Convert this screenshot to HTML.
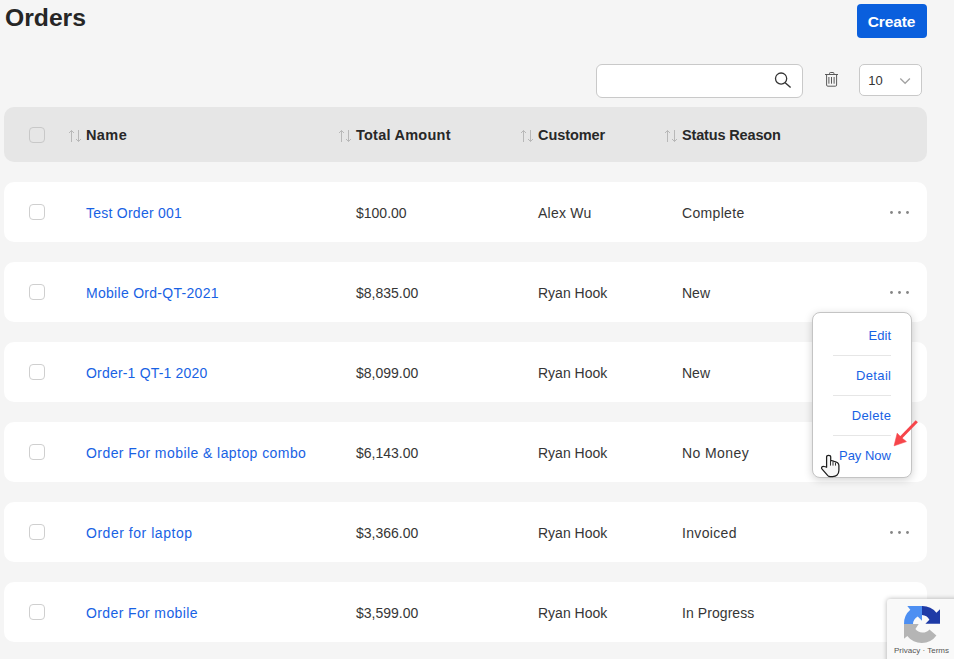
<!DOCTYPE html>
<html><head><meta charset="utf-8">
<style>
*{box-sizing:border-box;margin:0;padding:0}
html,body{width:954px;height:659px;overflow:hidden;background:#f5f5f5;font-family:"Liberation Sans",sans-serif;color:#333}
.abs{position:absolute}
.ov{position:absolute;left:0;top:0}
.title{position:absolute;left:5px;top:1px;font-size:24.7px;font-weight:bold;color:#262626;line-height:34px}
.create{position:absolute;left:857px;top:4px;width:70px;height:34px;background:#0a5fdd;border-radius:4px;color:#fff;font-weight:bold;font-size:15.5px;line-height:35px;text-align:center;letter-spacing:-0.1px;text-indent:-1px}
.search{position:absolute;left:596px;top:64px;width:207px;height:34px;background:#fff;border:1px solid #c9c9c9;border-radius:6px}
.sel{position:absolute;left:859px;top:64px;width:63px;height:32px;background:#fff;border:1px solid #c9c9c9;border-radius:5px;font-size:13px;color:#222}
.hdr{position:absolute;left:4px;top:107px;width:923px;height:55px;background:#e6e6e6;border-radius:10px}
.row{position:absolute;left:4px;width:923px;height:60px;background:#fff;border-radius:10px}
.cb{position:absolute;left:25px;width:16px;height:16px;border:1px solid #cfcfcf;border-radius:4px;background:#fff}
.hdr .cb{top:20px;background:transparent;border-color:#c8c8c8}
.row .cb{top:22px}
.ht{position:absolute;top:1px;line-height:55px;font-size:14.5px;font-weight:bold;color:#282828;white-space:nowrap}
.t{position:absolute;top:1px;line-height:60px;font-size:14px;color:#363636;white-space:nowrap}
.lnk{color:#1862e4}
.pop{position:absolute;left:812px;top:312px;width:100px;height:166px;background:#fff;border:1px solid #c4c4c4;border-radius:8px;box-shadow:0 2px 8px rgba(0,0,0,.18)}
.pi{position:absolute;right:20px;font-size:13px;color:#1862e4;line-height:16px;white-space:nowrap}
.sep{position:absolute;left:20px;width:58px;height:1px;background:#e6e6e6}
.badge{position:absolute;left:887px;top:599px;width:80px;height:70px;background:#f9f9f9;border-radius:3px 0 0 0;box-shadow:0 0 5px rgba(0,0,0,.3)}
</style></head><body>
<div class="title">Orders</div>
<div class="create">Create</div>
<div class="search"></div>
<div class="sel"><span class="abs" style="left:8.3px;top:8px;line-height:16px;color:#333">10</span></div>
<div class="hdr"><div class="cb"></div><div class="ht" style="left:82px;letter-spacing:0.4px">Name</div><div class="ht" style="left:352px;letter-spacing:0.24px">Total Amount</div><div class="ht" style="left:534px;letter-spacing:-0.07px">Customer</div><div class="ht" style="left:678px;letter-spacing:-0.15px">Status Reason</div></div>
<div class="row" style="top:182px"><div class="cb"></div><div class="t lnk" style="left:82px;letter-spacing:0.25px">Test Order 001</div><div class="t" style="left:352px">$100.00</div><div class="t" style="left:534px;letter-spacing:0.23px">Alex Wu</div><div class="t" style="left:678px;letter-spacing:0.33px">Complete</div></div>
<div class="row" style="top:262px"><div class="cb"></div><div class="t lnk" style="left:82px;letter-spacing:0.29px">Mobile Ord-QT-2021</div><div class="t" style="left:352px">$8,835.00</div><div class="t" style="left:534px">Ryan Hook</div><div class="t" style="left:678px">New</div></div>
<div class="row" style="top:342px"><div class="cb"></div><div class="t lnk" style="left:82px;letter-spacing:0.19px">Order-1 QT-1 2020</div><div class="t" style="left:352px">$8,099.00</div><div class="t" style="left:534px">Ryan Hook</div><div class="t" style="left:678px">New</div></div>
<div class="row" style="top:422px"><div class="cb"></div><div class="t lnk" style="left:82px;letter-spacing:0.43px">Order For mobile &amp; laptop combo</div><div class="t" style="left:352px">$6,143.00</div><div class="t" style="left:534px">Ryan Hook</div><div class="t" style="left:678px;letter-spacing:0.41px">No Money</div></div>
<div class="row" style="top:502px"><div class="cb"></div><div class="t lnk" style="left:82px;letter-spacing:0.53px">Order for laptop</div><div class="t" style="left:352px">$3,366.00</div><div class="t" style="left:534px">Ryan Hook</div><div class="t" style="left:678px;letter-spacing:0.33px">Invoiced</div></div>
<div class="row" style="top:582px"><div class="cb"></div><div class="t lnk" style="left:82px;letter-spacing:0.38px">Order For mobile</div><div class="t" style="left:352px">$3,599.00</div><div class="t" style="left:534px">Ryan Hook</div><div class="t" style="left:678px;letter-spacing:0.07px">In Progress</div></div>
<svg class="ov" width="954" height="659" viewBox="0 0 954 659"><circle cx="781.1" cy="78.6" r="5.6" fill="none" stroke="#333" stroke-width="1.3"/><path d="M785.2 82.7L790.6 87.6" stroke="#333" stroke-width="1.4"/><g fill="none" stroke="#5a5a5a" stroke-width="1"><path d="M829.6 74.4V73.2Q829.6 72.5 830.3 72.5H833.2Q833.9 72.5 833.9 73.2V74.4"/><path d="M825 74.5H838"/><path d="M826.6 74.5V85Q826.6 86.2 827.8 86.2H835.4Q836.6 86.2 836.6 85V74.5"/><path d="M828.9 77V83.7M831.5 77V83.7M834.1 77V83.7"/></g><path d="M900.3 78.5L905.1 83.3L909.9 78.5" fill="none" stroke="#a3a3a3" stroke-width="1.3"/><g fill="none" stroke="#b8b8b8" stroke-width="1"><path d="M71.5 130.5V142M69.0 133L71.5 130.5L74.0 133"/><path d="M78.5 130V141.5M76.0 139L78.5 141.5L81.0 139"/></g><g fill="none" stroke="#b8b8b8" stroke-width="1"><path d="M341.5 130.5V142M339.0 133L341.5 130.5L344.0 133"/><path d="M348.5 130V141.5M346.0 139L348.5 141.5L351.0 139"/></g><g fill="none" stroke="#b8b8b8" stroke-width="1"><path d="M523.5 130.5V142M521.0 133L523.5 130.5L526.0 133"/><path d="M530.5 130V141.5M528.0 139L530.5 141.5L533.0 139"/></g><g fill="none" stroke="#b8b8b8" stroke-width="1"><path d="M667.5 130.5V142M665.0 133L667.5 130.5L670.0 133"/><path d="M674.5 130V141.5M672.0 139L674.5 141.5L677.0 139"/></g><circle cx="891.5" cy="212.5" r="1.4" fill="#858585"/><circle cx="899.5" cy="212.5" r="1.4" fill="#858585"/><circle cx="907.5" cy="212.5" r="1.4" fill="#858585"/><circle cx="891.5" cy="292.5" r="1.4" fill="#858585"/><circle cx="899.5" cy="292.5" r="1.4" fill="#858585"/><circle cx="907.5" cy="292.5" r="1.4" fill="#858585"/><circle cx="891.5" cy="532.5" r="1.4" fill="#858585"/><circle cx="899.5" cy="532.5" r="1.4" fill="#858585"/><circle cx="907.5" cy="532.5" r="1.4" fill="#858585"/><circle cx="891.5" cy="612.5" r="1.4" fill="#858585"/><circle cx="899.5" cy="612.5" r="1.4" fill="#858585"/><circle cx="907.5" cy="612.5" r="1.4" fill="#858585"/></svg>
<div class="pop">
<div class="pi" style="top:15px">Edit</div>
<div class="sep" style="top:42px"></div>
<div class="pi" style="top:55px;letter-spacing:0.34px;right:19.66px">Detail</div>
<div class="sep" style="top:82px"></div>
<div class="pi" style="top:95px;letter-spacing:0.32px;right:19.68px">Delete</div>
<div class="sep" style="top:122px"></div>
<div class="pi" style="top:135px">Pay Now</div>
</div>
<svg class="ov" width="954" height="659" viewBox="0 0 954 659">
<path d="M916.8 421.2L900.5 438" stroke="#f6454a" stroke-width="3" stroke-linecap="butt"/>
<path d="M894.1 445.8L897.2 433.2L901.2 437.4L906.4 441.6Z" fill="#f6454a" stroke="#f6454a" stroke-width="0.6" stroke-linejoin="round"/>
<path d="M826.6 467.3V457.1Q826.6 455.3 828.65 455.3Q830.7 455.3 830.7 457.1V460.3L834.2 461.3Q836.3 461.8 837.6 462.8Q838.9 463.8 838.9 465.6V470.2Q838.9 473.6 836.9 475.3Q835.6 476.6 832.6 476.6H830.2Q828.8 476.6 827.8 475.6L822.1 469.2Q821.2 468.1 821.7 467.2Q822.4 466.4 823.9 466.5Q825.4 466.6 826.6 467.3Z" fill="#f8f8f8" stroke="#1e1e1e" stroke-width="1.25" stroke-linejoin="round"/><path d="M830.5 460.4V465.6M833 462V465.6M835.5 462.6V465.6" stroke="#333" stroke-width="1"/>
</svg>
<div class="badge"><div class="abs" style="left:7px;top:47px;font-size:8px;color:#555;white-space:nowrap;line-height:10px">Privacy &middot; Terms</div></div>
<svg class="ov" width="954" height="659" viewBox="0 0 954 659">
<path d="M907.3 606H922V620.7L917.7 616.4A9 9 0 0 0 913 624H904A18 18 0 0 1 910.3 609.7Z" fill="#4d8ff2"/>
<path d="M922 606A18 18 0 0 1 936.4 612.7L940 609.3V623.7H925.4L929.4 619.7A9 9 0 0 0 922 615Z" fill="#1e3aa6"/>
<path d="M904 624H918.7L915.4 629A9 9 0 0 0 929.4 629.4L936.4 635.4A18 18 0 0 1 907.3 636L904 638.7Z" fill="#b5b5b5"/>
</svg>
</body></html>
